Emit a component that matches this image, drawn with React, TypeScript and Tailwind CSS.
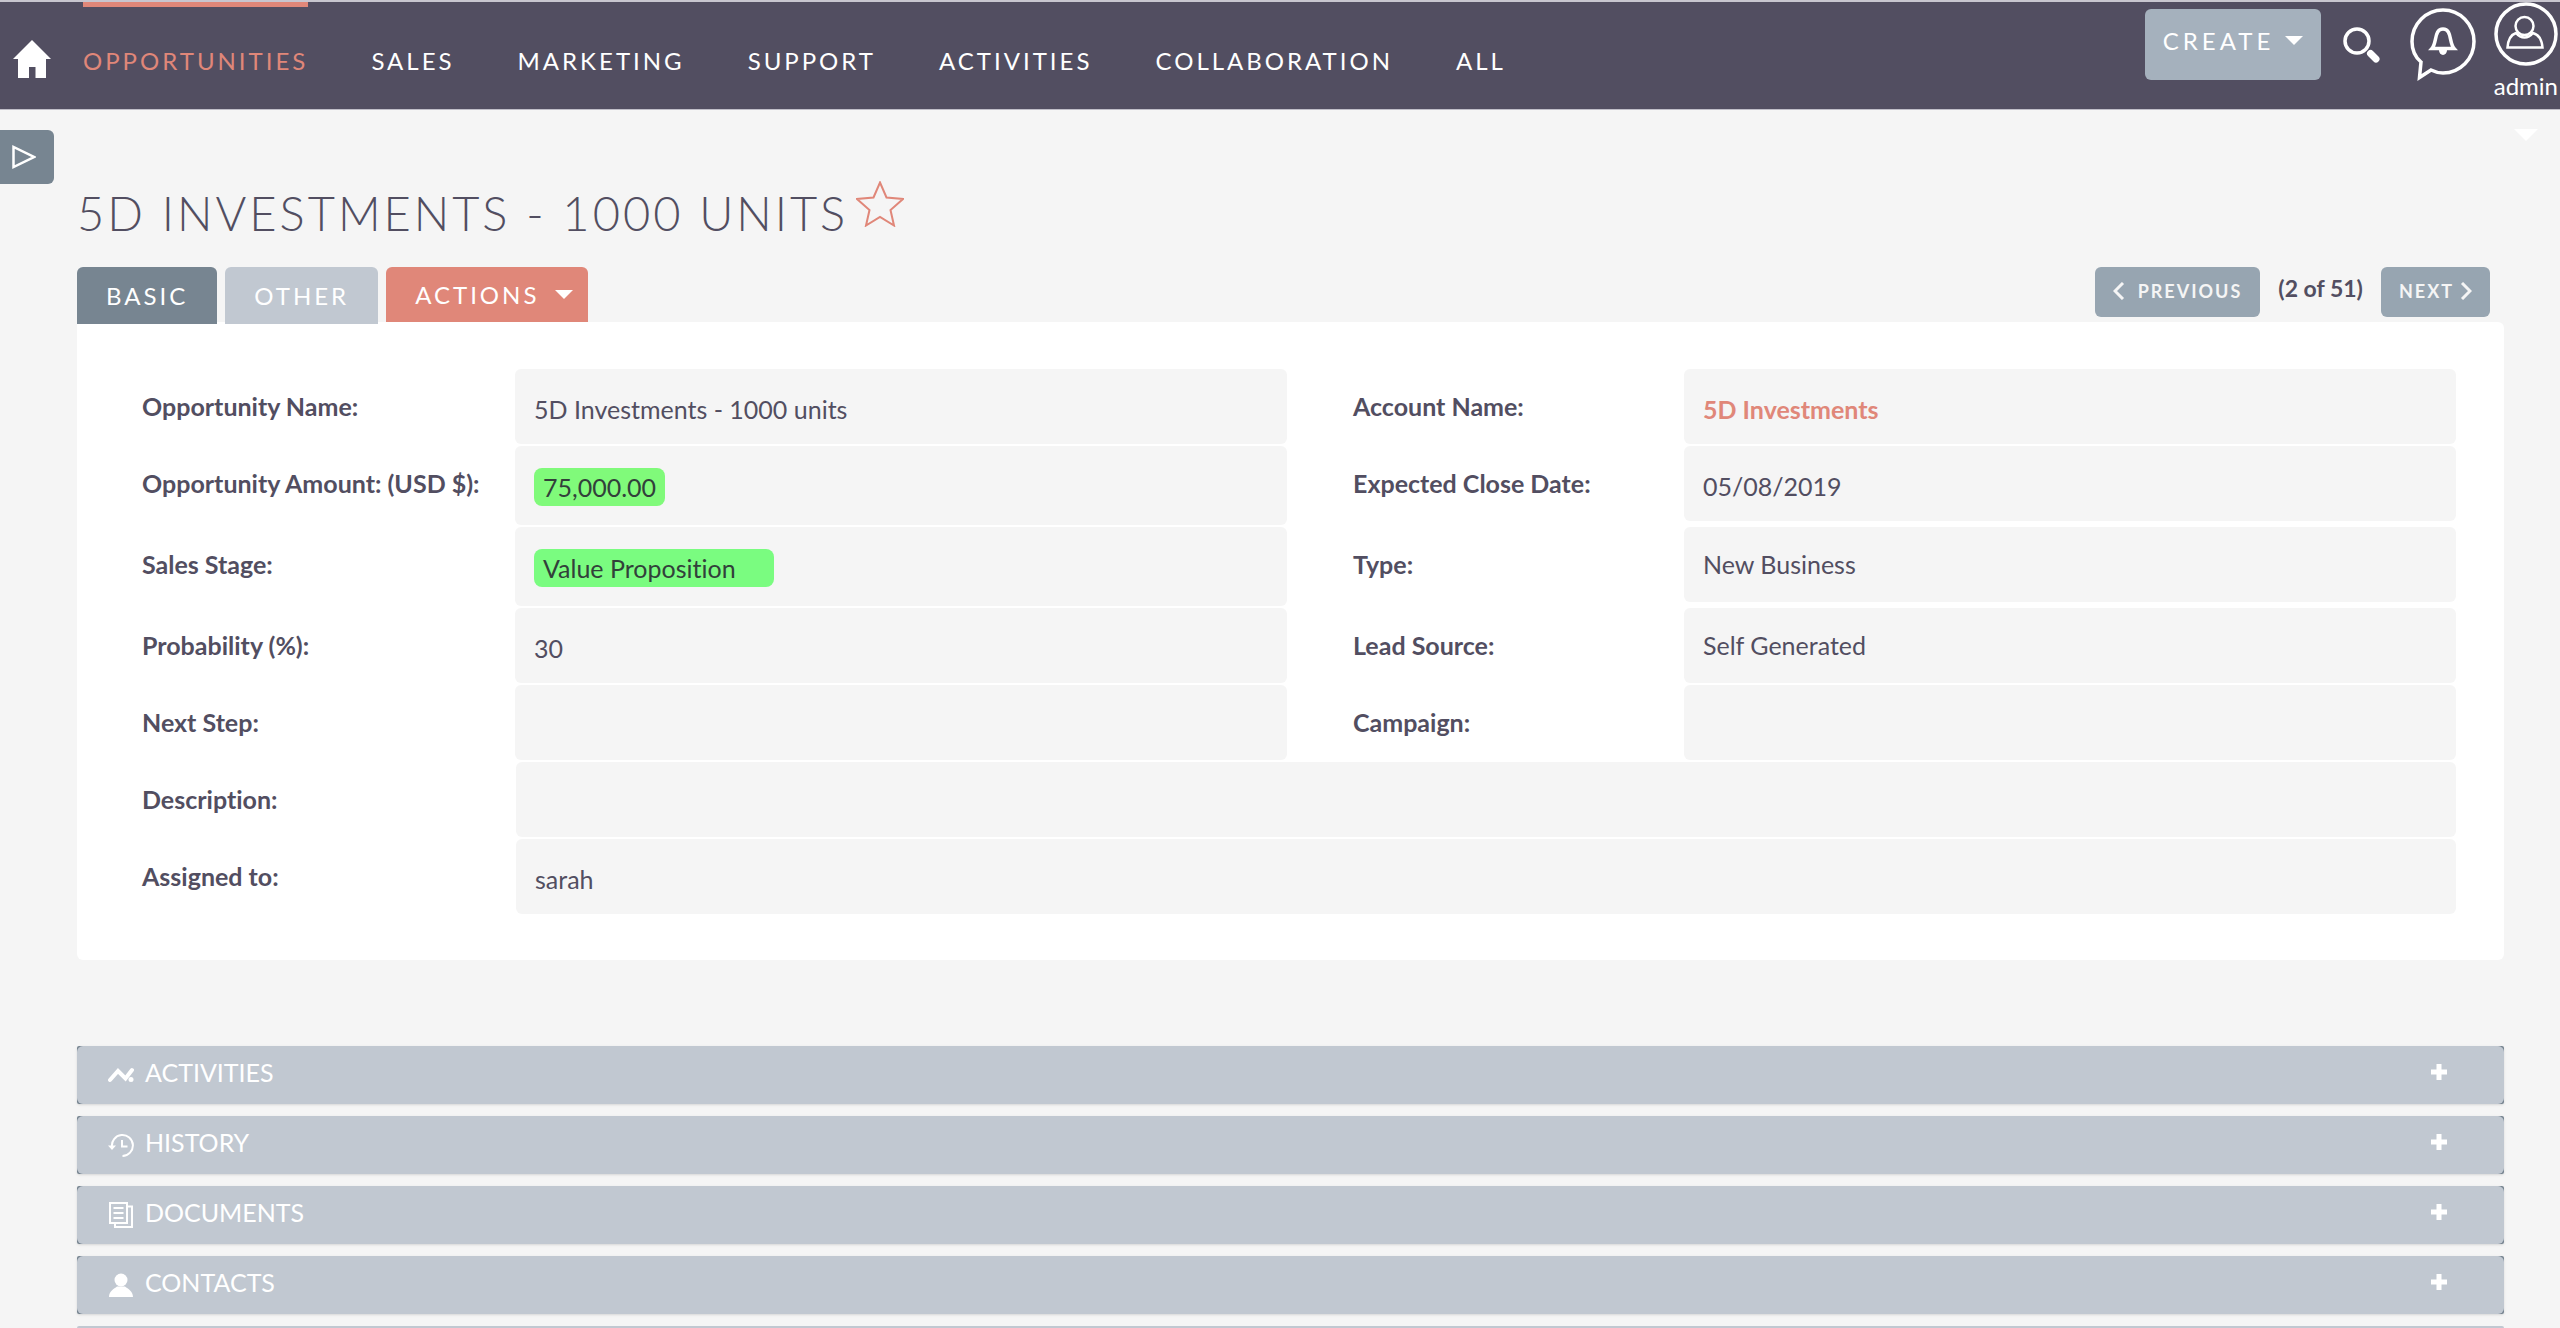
import { useState } from 'react';
import type { ReactNode } from 'react';

const NAV_ITEMS = ['Sales', 'Marketing', 'Support', 'Activities', 'Collaboration', 'All'];

type Field = { label: string; value?: ReactNode; wide?: boolean; highlighted?: boolean };

const FIELDS: Field[] = [
  { label: 'Opportunity Name:', value: '5D Investments - 1000 units' },
  {
    label: 'Account Name:',
    value: <a href="#account" className="font-bold text-[#e08779]">5D Investments</a>,
  },
  {
    label: 'Opportunity Amount: (USD $):',
    highlighted: true,
    value: <span className="inline-block rounded-lg bg-[#80fa7a] px-[9px] py-px text-[#32403a]">75,000.00</span>,
  },
  { label: 'Expected Close Date:', value: '05/08/2019' },
  {
    label: 'Sales Stage:',
    highlighted: true,
    value: <span className="inline-block rounded-lg bg-[#7afc80] py-px pl-[9px] pr-[38px] text-[#32403a]">Value Proposition</span>,
  },
  { label: 'Type:', value: 'New Business' },
  { label: 'Probability (%):', value: '30' },
  { label: 'Lead Source:', value: 'Self Generated' },
  { label: 'Next Step:' },
  { label: 'Campaign:' },
  { label: 'Description:', wide: true },
  { label: 'Assigned to:', value: 'sarah', wide: true },
];

function Caret({ className }: { className: string }) {
  return (
    <svg viewBox="0 0 18 9" className={className} fill="currentColor" aria-hidden="true">
      <path d="M0 0h18L9 9z" />
    </svg>
  );
}

function HomeIcon() {
  return (
    <svg viewBox="0 0 38 38" className="h-[38px] w-[38px]" fill="currentColor" aria-hidden="true">
      <path d="M19 0 38 19H33V38H22.500V27H16V38H5V19H0z" />
    </svg>
  );
}

function SearchIcon() {
  return (
    <svg viewBox="0 0 37 36" className="h-9 w-[37px]" fill="none" stroke="currentColor" aria-hidden="true">
      <circle cx="14" cy="14" r="12" strokeWidth="3.500" />
      <path d="M27.500 26.500 33 32" strokeWidth="7" strokeLinecap="round" />
    </svg>
  );
}

function BellIcon() {
  return (
    <svg viewBox="0 0 66 73" className="h-[73px] w-[66px]" fill="none" stroke="currentColor" strokeWidth="3.500" aria-hidden="true">
      <path d="M11 54C5 49 2 42 2 33.500A31 31.500 0 1 1 33 65C28 65 25 64 21 62L9.500 69.500z" />
      <path d="M22 40.500C27 35 24 21 33 21S39 35 44 40.500z" />
      <path d="M29 42h8a4 5 0 0 1-8 0z" fill="currentColor" stroke="none" />
    </svg>
  );
}

function AvatarIcon() {
  return (
    <svg viewBox="0 0 64 64" className="h-16 w-16" fill="none" stroke="currentColor" aria-hidden="true">
      <circle cx="32" cy="32" r="30" strokeWidth="3.500" />
      <circle cx="30.500" cy="24" r="9" strokeWidth="2.500" />
      <path d="M22 31C16 33 14 39 13.500 45.500H48.500C48 39 46 33 39 31C34 37 27 37 22 31z" strokeWidth="2.500" />
    </svg>
  );
}

function ActivitiesIcon() {
  return (
    <svg viewBox="0 0 26 26" className="h-[26px] w-[26px]" fill="none" stroke="currentColor" aria-hidden="true">
      <path d="M2 18 10 9 17.500 16.500 24 8" strokeWidth="4" strokeLinecap="round" />
      <circle cx="23" cy="17.500" r="2.500" fill="currentColor" stroke="none" />
    </svg>
  );
}

function HistoryIcon() {
  return (
    <svg viewBox="0 0 26 26" className="h-[26px] w-[26px]" fill="none" stroke="currentColor" strokeWidth="2" aria-hidden="true">
      <path d="M4 15A10.500 10.500 0 1 1 14.500 24" />
      <path d="M14 8V14.500H19.500" />
      <path d="M0 13.500H8L4 18z" fill="currentColor" stroke="none" />
    </svg>
  );
}

function DocumentsIcon() {
  return (
    <svg viewBox="0 0 26 26" className="h-[26px] w-[26px]" fill="none" stroke="currentColor" strokeWidth="2" aria-hidden="true">
      <path d="M2 1H19V21H2z" />
      <path d="M20 4.500H24V25H7V22" />
      <path d="M5.500 6H15.500M5.500 11H15.500M5.500 16H15.500" />
    </svg>
  );
}

function ContactsIcon() {
  return (
    <svg viewBox="0 0 26 26" className="h-[26px] w-[26px]" fill="currentColor" aria-hidden="true">
      <circle cx="13" cy="8" r="6.500" />
      <path d="M1 25C1 19 6 17 9 14.500H17C20 17 25 19 25 25z" />
    </svg>
  );
}

const SUBPANELS = [
  { id: 'activities', label: 'Activities', icon: <ActivitiesIcon /> },
  { id: 'history', label: 'History', icon: <HistoryIcon /> },
  { id: 'documents', label: 'Documents', icon: <DocumentsIcon /> },
  { id: 'contacts', label: 'Contacts', icon: <ContactsIcon /> },
];

export default function App() {
  const [tab, setTab] = useState('basic');

  return (
    <div className="h-screen overflow-hidden bg-[#f5f5f5] font-['Lato',sans-serif] text-[25px] leading-9 text-[#524e61] [font-variant-ligatures:none]">
      {/* Top navigation */}
      <header className="flex h-[110px] items-start justify-between border-t-2 border-b border-t-[#c8c6cf] border-b-[#c0bec8] bg-[#524e61] text-white">
        <nav className="flex items-start">
          <a href="#home" aria-label="Home" className="mt-[38px] ml-[13px]">
            <HomeIcon />
          </a>
          <ul className="ml-8 flex gap-[63px] text-2xl uppercase tracking-[3px]">
            <li>
              <a href="#opportunities" className="block border-t-[5px] border-[#e08779] pt-[38px] text-[#e08779]">
                Opportunities
              </a>
            </li>
            {NAV_ITEMS.map((item) => (
              <li key={item}>
                <a href={`#${item.toLowerCase()}`} className="block pt-[43px]">{item}</a>
              </li>
            ))}
          </ul>
        </nav>

        <div className="flex items-start">
          <button className="mt-[7px] mr-[22px] flex h-[71px] w-44 items-start justify-between rounded-md bg-[#a5b1bd] px-[18px] pt-4 text-2xl uppercase tracking-[4px]">
            Create
            <Caret className="mt-[11px] h-[9px] w-[18px]" />
          </button>
          <button aria-label="Search" className="mt-[25px] mr-[30px]">
            <SearchIcon />
          </button>
          <button aria-label="Notifications" className="mt-[6px] mr-[18px]">
            <BellIcon />
          </button>
          <button className="relative mr-[2px] flex flex-col items-center text-2xl">
            <AvatarIcon />
            <span className="mt-1">admin</span>
            <Caret className="absolute top-[127px] h-3 w-6" />
          </button>
        </div>
      </header>

      <button aria-label="Show sidebar" className="mt-5 flex h-[54px] w-[54px] items-center rounded-r-md bg-[#778591] pl-3 text-white">
        <svg viewBox="0 0 24 24" className="h-6 w-6" fill="none" stroke="currentColor" strokeWidth="2.500" aria-hidden="true">
          <path d="M1.500 2V22L22 12z" />
        </svg>
      </button>

      <main className="mr-14 ml-[77px]">
        <div className="flex items-start gap-2">
          <h1 className="pt-px text-[47px] leading-[56px] font-light uppercase tracking-[3px]">5D Investments - 1000 units</h1>
          <button aria-label="Add to favorites" className="-mt-[3px] text-[#e08779]">
            <svg viewBox="0 0 48 46" className="h-[46px] w-12" fill="none" stroke="currentColor" strokeWidth="2" aria-hidden="true">
              <path d="M24 1.500 30.500 16.500 47 18 34.500 29 38 44.500 24 36 10 44.500 13.500 29 1 18 17.500 16.500z" />
            </svg>
          </button>
        </div>

        <div className="mt-[26px] flex items-start justify-between">
          <div className="flex items-start gap-2 text-2xl text-white">
            <button onClick={() => setTab('basic')} className={`h-[57px] rounded-t-md px-[29px] uppercase tracking-[3px] ${tab === 'basic' ? 'bg-[#778591]' : 'bg-[#c1c8d1]'}`}>
              Basic
            </button>
            <button onClick={() => setTab('other')} className={`h-[57px] rounded-t-md px-[29px] uppercase tracking-[3px] ${tab === 'other' ? 'bg-[#778591]' : 'bg-[#c1c8d1]'}`}>
              Other
            </button>
            <button className="flex h-[55px] items-center gap-4 rounded-t-md bg-[#e08779] pr-[15px] pl-[29px] uppercase tracking-[3px]">
              Actions
              <Caret className="h-[9px] w-[18px]" />
            </button>
          </div>
          <div className="mr-[14px] flex items-start gap-[18px] font-bold">
            <button className="flex h-[50px] items-center gap-[13px] rounded-md bg-[#97a5b1] px-[18px] pb-[2px] text-lg uppercase tracking-[2px] text-[#f5f5f5]">
              <svg viewBox="0 0 12 18" className="h-[18px] w-3" fill="none" stroke="currentColor" strokeWidth="3" aria-hidden="true"><path d="M10 1 2 9 10 17" /></svg>
              Previous
            </button>
            <span className="mt-[3px] text-[23px] leading-9">(2 of 51)</span>
            <button className="flex h-[50px] items-center gap-[6px] rounded-md bg-[#97a5b1] px-[18px] pb-[2px] text-lg uppercase tracking-[2px] text-[#f5f5f5]">
              Next
              <svg viewBox="0 0 12 18" className="h-[18px] w-3" fill="none" stroke="currentColor" strokeWidth="3" aria-hidden="true"><path d="M2 1 10 9 2 17" /></svg>
            </button>
          </div>
        </div>

        {/* Record details */}
        <dl className="-mt-[2px] grid grid-cols-[373px_minmax(0,1fr)_397px_minmax(0,1fr)] gap-y-[2px] rounded-b-md rounded-tr-md bg-white pt-[47px] pr-12 pb-[46px] pl-[65px]">
          {FIELDS.map((field, i) => (
            <div key={field.label} className="contents">
              <dt className={`pt-[19px] font-bold ${!field.wide && i % 2 ? 'pl-[66px]' : ''}`}>{field.label}</dt>
              <dd className={`min-h-[75px] rounded-md bg-[#f5f5f5] pl-[19px] ${field.wide ? 'col-span-3 ml-px' : 'self-start'} ${field.highlighted ? 'h-[79px] pt-[22px]' : i === 5 || i === 7 ? 'pt-[19px]' : 'pt-[22px]'}`}>
                {field.value}
              </dd>
            </div>
          ))}
        </dl>

        {/* Related records */}
        <section className="mt-[86px] flex flex-col gap-3 uppercase text-white">
          {SUBPANELS.map((panel) => (
            <div key={panel.id} className="rounded-[2px] bg-[#778591] shadow-sm">
              <button className="flex h-[58px] w-full items-start justify-between rounded-md bg-[#c1c8d1] pt-2 pr-[57px] pl-[31px] uppercase">
                <span className="flex items-start gap-[11px]">
                  <span className="mt-2">{panel.icon}</span>
                  {panel.label}
                </span>
                <svg viewBox="0 0 16 16" className="mt-[10px] h-4 w-4" stroke="currentColor" strokeWidth="5" aria-hidden="true">
                  <path d="M8 0V16M0 8H16" />
                </svg>
              </button>
            </div>
          ))}
          <div className="h-[58px] rounded-[2px] bg-[#c1c8d1]" />
        </section>
      </main>
    </div>
  );
}
